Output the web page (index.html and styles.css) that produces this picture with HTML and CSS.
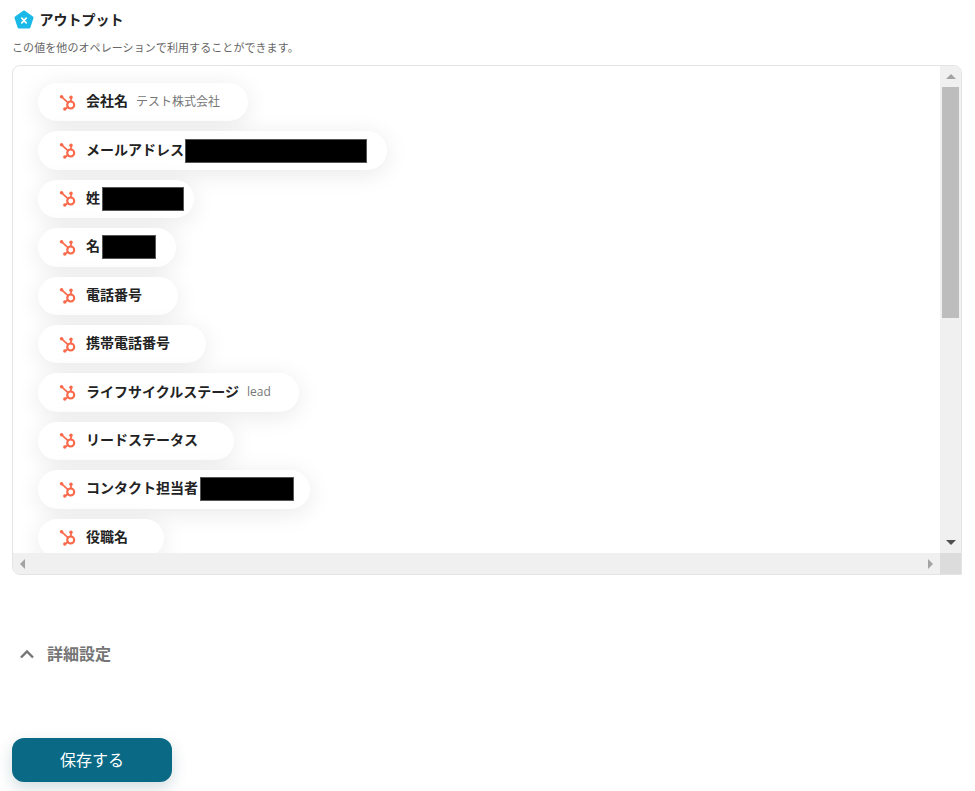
FILE: index.html
```html
<!DOCTYPE html>
<html lang="ja">
<head>
  <meta charset="UTF-8">
  <title>アウトプット</title>
  <link rel="stylesheet" href="styles.css">
</head>
<body>
  <svg width="0" height="0" class="defs">
    <symbol id="hub" viewBox="0 0 18 16">
      <g fill="none" stroke="#f9694a" stroke-width="1.7" stroke-linecap="round">
        <circle cx="11.7" cy="10" r="3.5" stroke-width="2.1"/>
        <path d="M2.7 1.9 9 7.6M12 2.7V6.4M6 14l3-2"/>
      </g>
      <circle cx="2.6" cy="1.8" r="1.8" fill="#f9694a"/>
      <circle cx="12" cy="2.2" r="1.7" fill="#f9694a"/>
      <circle cx="5.8" cy="14" r="1.7" fill="#f9694a"/>
    </symbol>
  </svg>

  <div class="heading">
    <svg class="heading-icon" width="20" height="20" viewBox="0 0 20 20">
      <path d="M10 2 18 7.8 15 17H5L2 7.8Z" fill="#1ab9e8" stroke="#1ab9e8" stroke-width="3" stroke-linejoin="round"/>
      <path d="M7.8 8.2 12.2 12.8M12.2 8.2 7.8 12.8" stroke="#fff" stroke-width="1.7" stroke-linecap="round"/>
    </svg>
    <h2>アウトプット</h2>
  </div>
  <p class="note">この値を他のオペレーションで利用することができます。</p>

  <div class="panel">
    <div class="list">
      <div class="pill"><svg class="hub"><use href="#hub"/></svg><b>会社名</b><span class="value">テスト株式会社</span></div>
      <div class="pill"><svg class="hub"><use href="#hub"/></svg><b>メールアドレス</b><span class="mask mask-mail"></span></div>
      <div class="pill"><svg class="hub"><use href="#hub"/></svg><b>姓</b><span class="mask mask-sei"></span></div>
      <div class="pill"><svg class="hub"><use href="#hub"/></svg><b>名</b><span class="mask mask-mei"></span></div>
      <div class="pill"><svg class="hub"><use href="#hub"/></svg><b>電話番号</b><span class="value"></span></div>
      <div class="pill"><svg class="hub"><use href="#hub"/></svg><b>携帯電話番号</b><span class="value"></span></div>
      <div class="pill"><svg class="hub"><use href="#hub"/></svg><b>ライフサイクルステージ</b><span class="value">lead</span></div>
      <div class="pill"><svg class="hub"><use href="#hub"/></svg><b>リードステータス</b><span class="value"></span></div>
      <div class="pill"><svg class="hub"><use href="#hub"/></svg><b>コンタクト担当者</b><span class="mask mask-owner"></span></div>
      <div class="pill"><svg class="hub"><use href="#hub"/></svg><b>役職名</b><span class="value"></span></div>
    </div>
    <div class="vbar">
      <span class="arrow arrow-up"></span>
      <div class="vtrack"><div class="vthumb"></div></div>
      <span class="arrow arrow-down"></span>
    </div>
    <div class="hbar">
      <span class="arrow arrow-left"></span>
      <span class="arrow arrow-right"></span>
    </div>
    <div class="corner"></div>
  </div>

  <div class="advanced">
    <svg width="16" height="10" viewBox="0 0 16 10"><path d="M2 8.5 8 2.5 14 8.5" fill="none" stroke="#757575" stroke-width="2.4"/></svg>
    <span>詳細設定</span>
  </div>

  <button class="save">保存する</button>
</body>
</html>
```

FILE: styles.css
```css
* {
  box-sizing: border-box;
  margin: 0;
  padding: 0;
}
html {
  background-color: #fff;
}
body {
  height: 791px;
  overflow: hidden;
  padding: 10px 13px 0 12px;
  font-family: 'Noto Sans CJK JP', 'Noto Sans', sans-serif;
  color: #222;
}
.defs {
  position: absolute;
}

.heading {
  display: flex;
  align-items: center;
  height: 20px;
  padding-left: 2px;
}
.heading-icon {
  margin-right: 5.6px;
}
.heading h2 {
  padding-bottom: 2px;
  font-size: 14px;
  font-weight: 700;
  line-height: 20px;
}
.note {
  margin-top: 9px;
  font-size: 11px;
  letter-spacing: 0.08px;
  line-height: 16px;
  color: #666;
}

.panel {
  display: grid;
  grid-template-columns: 1fr 21px;
  grid-template-rows: 487px 21px;
  height: 510px;
  margin-top: 10px;
  border: 1px solid #e4e4e4;
  border-radius: 8px 8px 0 8px;
  overflow: hidden;
}
.list {
  display: flex;
  flex-direction: column;
  align-items: flex-start;
  gap: 10px;
  padding: 17px 0 0 25px;
  overflow: hidden;
}
.pill {
  display: flex;
  flex: none;
  align-items: center;
  height: 38.4px;
  padding: 0 20px 4px;
  border-radius: 20px;
  background-color: #fff;
  box-shadow: 0 4px 24px rgba(0,0,0,0.09);
  font-size: 14px;
}
.pill b {
  font-weight: 700;
  color: #222;
}
.hub {
  width: 18px;
  height: 16px;
  margin: 5px 9px 0 1px;
}
.value {
  margin: 2px 8px 0;
  font-family: 'Open Sans', 'Noto Sans CJK JP', sans-serif;
  font-size: 12px;
  color: #777;
}
.mask {
  height: 24px;
  margin: 4px 0 0 2px;
  background-color: #000;
  border: 1px solid #555;
}
.mask-mail { width: 182px; margin-left: 1px; }
.mask-sei { width: 82px; margin-right: -10px; }
.mask-mei { width: 54px; }
.mask-owner { width: 94px; margin-right: -4px; }

.vbar {
  display: flex;
  flex-direction: column;
  align-items: center;
  background-color: #f0f0f0;
}
.vtrack {
  flex: 1;
  width: 17px;
  padding-top: 8px;
}
.vthumb {
  height: 231px;
  background-color: #bdbdbd;
}
.hbar {
  display: flex;
  align-items: center;
  justify-content: space-between;
  padding: 0 7px;
  background-color: #f0f0f0;
}
.corner {
  background-color: #dcdcdc;
}

.arrow {
  display: block;
  flex: none;
  width: 0;
  height: 0;
  border-style: solid;
  border-color: transparent;
}
.arrow-up {
  margin-top: 8px;
  border-width: 0 5px 5px;
  border-bottom-color: #a3a3a3;
}
.arrow-down {
  margin-bottom: 8px;
  border-width: 5px 5px 0;
  border-top-color: #505050;
}
.arrow-left {
  border-width: 5px 5px 5px 0;
  border-right-color: #a3a3a3;
}
.arrow-right {
  border-width: 5px 0 5px 5px;
  border-left-color: #a3a3a3;
}

.advanced {
  display: flex;
  align-items: center;
  gap: 12px;
  margin-top: 67px;
  padding-left: 7px;
  height: 24px;
  font-size: 16px;
  font-weight: 700;
  color: #757575;
}
.advanced span {
  padding-bottom: 2px;
}

.save {
  display: block;
  width: 160px;
  height: 44px;
  margin-top: 72px;
  padding-bottom: 3px;
  border: none;
  border-radius: 12px;
  background-color: #0a6a85;
  color: #fff;
  font-family: inherit;
  font-size: 16px;
  box-shadow: 0 6px 16px rgba(10,60,80,0.18);
}
```
